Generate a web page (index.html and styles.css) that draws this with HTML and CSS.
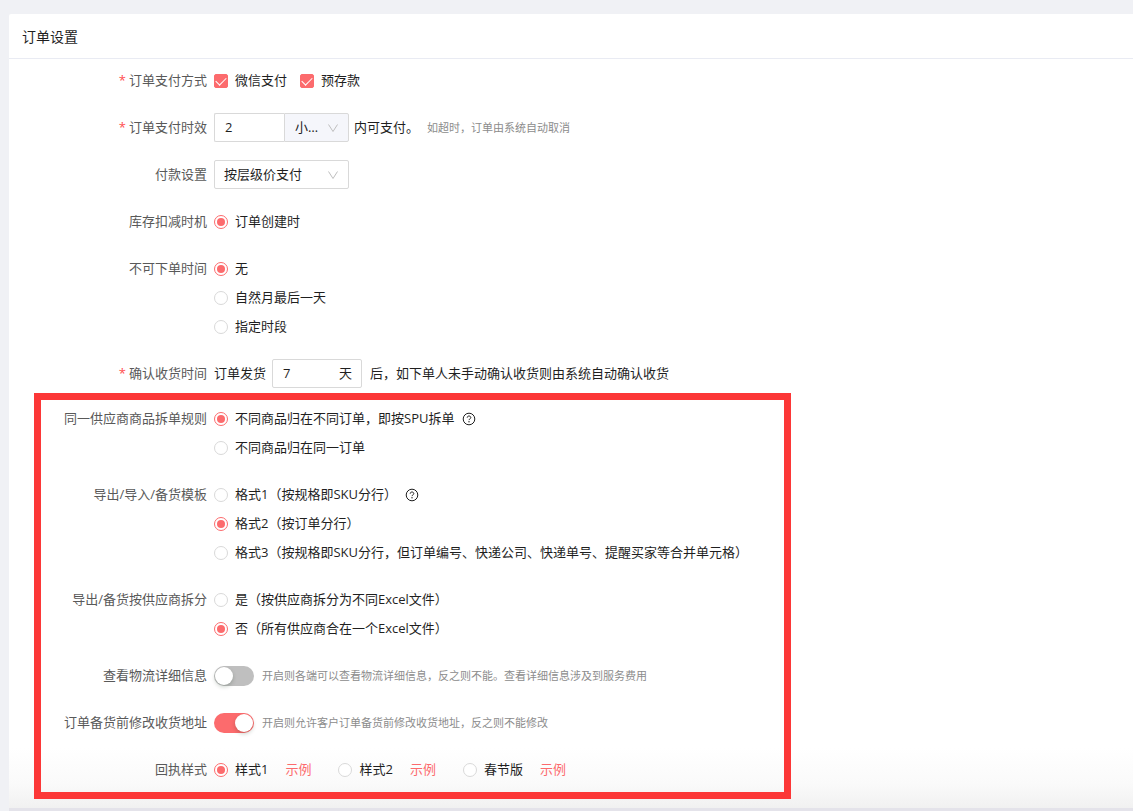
FILE: index.html
```html
<!DOCTYPE html>
<html lang="zh-CN">
  <head>
    <meta charset="UTF-8" />
    <meta name="viewport" content="width=device-width, initial-scale=1.0" />
    <title>订单设置</title>
    <link rel="stylesheet" href="styles.css" />
  </head>
  <body>
    <svg class="sprite" aria-hidden="true">
      <symbol id="icon-help" viewBox="0 0 14 14">
        <circle cx="7" cy="7" r="5.8" fill="none" stroke="currentColor" stroke-width="1" />
        <path d="M5.2 5.7C5.2 4.6 6 4 7 4s1.8.6 1.8 1.6c0 1.3-1.8 1.3-1.8 2.5" fill="none" stroke="currentColor" stroke-width="1" />
        <circle cx="7" cy="9.8" r="0.7" fill="currentColor" />
      </symbol>
      <symbol id="icon-down" viewBox="0 0 12 12">
        <path d="M1.5 2.5L6 9.500l4.500-7" fill="none" stroke="currentColor" stroke-width="1" />
      </symbol>
    </svg>

    <main class="panel">
      <h1 class="panel-title">订单设置</h1>
      <form class="settings">
        <div class="form-row" role="group" aria-labelledby="l-pay">
          <span class="row-label required" id="l-pay">订单支付方式</span>
          <div class="row-line">
            <label class="choice"><input type="checkbox" checked />微信支付</label>
            <label class="choice"><input type="checkbox" checked />预存款</label>
          </div>
        </div>

        <div class="form-row">
          <label class="row-label required" for="expire">订单支付时效</label>
          <div class="row-line">
            <div class="input-group">
              <input class="group-input" id="expire" type="text" value="2" />
              <div class="select-box unit">
                <select aria-label="时间单位">
                  <option>小时</option>
                  <option>分钟</option>
                </select>
                <svg class="arrow"><use href="#icon-down" /></svg>
              </div>
            </div>
            <span class="after">内可支付。</span>
            <span class="hint">如超时，订单由系统自动取消</span>
          </div>
        </div>

        <div class="form-row">
          <label class="row-label" for="payset">付款设置</label>
          <div class="row-line">
            <div class="select-box">
              <select id="payset">
                <option>按层级价支付</option>
              </select>
              <svg class="arrow"><use href="#icon-down" /></svg>
            </div>
          </div>
        </div>

        <div class="form-row" role="group" aria-labelledby="l-stock">
          <span class="row-label" id="l-stock">库存扣减时机</span>
          <div class="row-line">
            <label class="choice"><input type="radio" name="stock" checked />订单创建时</label>
          </div>
        </div>

        <div class="form-row" role="group" aria-labelledby="l-ban">
          <span class="row-label" id="l-ban">不可下单时间</span>
          <div class="row-stack">
            <label class="choice"><input type="radio" name="ban" checked />无</label>
            <label class="choice"><input type="radio" name="ban" />自然月最后一天</label>
            <label class="choice"><input type="radio" name="ban" />指定时段</label>
          </div>
        </div>

        <div class="form-row">
          <label class="row-label required" for="receive">确认收货时间</label>
          <div class="row-line">
            <span>订单发货</span>
            <div class="day-box">
              <input id="receive" type="text" value="7" />
              <span>天</span>
            </div>
            <span>后，如下单人未手动确认收货则由系统自动确认收货</span>
          </div>
        </div>

        <section class="highlight">
          <div class="form-row" role="group" aria-labelledby="l-split">
            <span class="row-label" id="l-split">同一供应商商品拆单规则</span>
            <div class="row-stack">
              <div class="row-line">
                <label class="choice"><input type="radio" name="split" checked />不同商品归在不同订单，即按SPU拆单</label>
                <button class="help" type="button" aria-label="说明"><svg><use href="#icon-help" /></svg></button>
              </div>
              <label class="choice"><input type="radio" name="split" />不同商品归在同一订单</label>
            </div>
          </div>

          <div class="form-row" role="group" aria-labelledby="l-tpl">
            <span class="row-label" id="l-tpl">导出/导入/备货模板</span>
            <div class="row-stack">
              <div class="row-line">
                <label class="choice"><input type="radio" name="tpl" />格式1（按规格即SKU分行）</label>
                <button class="help" type="button" aria-label="说明"><svg><use href="#icon-help" /></svg></button>
              </div>
              <label class="choice"><input type="radio" name="tpl" checked />格式2（按订单分行）</label>
              <label class="choice"><input type="radio" name="tpl" />格式3（按规格即SKU分行，但订单编号、快递公司、快递单号、提醒买家等合并单元格）</label>
            </div>
          </div>

          <div class="form-row" role="group" aria-labelledby="l-supplier">
            <span class="row-label" id="l-supplier">导出/备货按供应商拆分</span>
            <div class="row-stack">
              <label class="choice"><input type="radio" name="supplier" />是（按供应商拆分为不同Excel文件）</label>
              <label class="choice"><input type="radio" name="supplier" checked />否（所有供应商合在一个Excel文件）</label>
            </div>
          </div>

          <div class="form-row">
            <label class="row-label" for="logistics">查看物流详细信息</label>
            <div class="row-line">
              <input class="switch" id="logistics" type="checkbox" role="switch" />
              <span class="hint">开启则各端可以查看物流详细信息，反之则不能。查看详细信息涉及到服务费用</span>
            </div>
          </div>

          <div class="form-row">
            <label class="row-label" for="address">订单备货前修改收货地址</label>
            <div class="row-line">
              <input class="switch" id="address" type="checkbox" role="switch" checked />
              <span class="hint">开启则允许客户订单备货前修改收货地址，反之则不能修改</span>
            </div>
          </div>

          <div class="form-row" role="group" aria-labelledby="l-receipt">
            <span class="row-label" id="l-receipt">回执样式</span>
            <div class="row-line">
              <label class="choice"><input type="radio" name="receipt" checked />样式1</label>
              <a class="sample" href="#">示例</a>
              <label class="choice"><input type="radio" name="receipt" />样式2</label>
              <a class="sample" href="#">示例</a>
              <label class="choice"><input type="radio" name="receipt" />春节版</label>
              <a class="sample" href="#">示例</a>
            </div>
          </div>
        </section>
      </form>
    </main>
  </body>
</html>
```

FILE: styles.css
```css
* {
  margin: 0;
  padding: 0;
  box-sizing: border-box;
}
body {
  --primary: #fc6b6d;
  --border: #d9d9d9;
  padding: 14px 0 0 9px;
  background: #f0f1f5;
  color: #1f1f1f;
  font-family: "Open Sans", "Noto Sans CJK SC", sans-serif;
  font-size: 13px;
  line-height: 29px;
}
input,
select,
button {
  font: inherit;
  color: inherit;
}
.sprite {
  position: absolute;
  width: 0;
  height: 0;
}
.panel {
  background: linear-gradient(to top, #f1f1f1, #fafafa 24px, #fff 60px);
  border-bottom: 3px solid #e4e3ea;
  border-radius: 2px 0 0 0;
}
.panel-title {
  padding: 9px 13px 7px;
  border-bottom: 1px solid #e9ebf3;
  font-size: 14px;
  font-weight: 400;
  line-height: 28px;
}
.settings {
  --label-width: 198px;
  padding: 7px 0 9px;
}
.form-row {
  display: flex;
  gap: 7px;
}
.form-row + .form-row {
  margin-top: 18px;
}
.row-label {
  flex: none;
  width: var(--label-width);
  color: #595959;
  text-align: right;
  white-space: nowrap;
}
.required::before {
  content: "*";
  margin-right: 3px;
  color: #ff4d4f;
}
.row-line {
  display: flex;
  align-items: center;
  min-height: 29px;
}
.row-stack {
  display: flex;
  flex-direction: column;
  align-items: flex-start;
}

/* checkbox & radio */
.choice {
  display: flex;
  align-items: center;
  gap: 7px;
  cursor: pointer;
}
.choice + .choice {
  margin-left: 13px;
}
.row-stack .choice {
  margin-left: 0;
}
.choice input {
  appearance: none;
  display: grid;
  place-items: center;
  flex: none;
  width: 14px;
  height: 14px;
  border: 1px solid var(--border);
  background: #fff;
}
.choice input[type="radio"] {
  border-radius: 50%;
}
.choice input:checked {
  border-color: var(--primary);
}
.choice input[type="radio"]:checked::before {
  content: "";
  width: 8px;
  height: 8px;
  border-radius: 50%;
  background: var(--primary);
}
.choice input[type="checkbox"] {
  border-radius: 2px;
}
.choice input[type="checkbox"]:checked {
  background: var(--primary);
}
.choice input[type="checkbox"]:checked::before {
  content: "";
  width: 9px;
  height: 5px;
  border: solid #fff;
  border-width: 0 0 1px 1px;
  transform: translateY(-1px) rotate(-45deg);
}

/* inputs */
.input-group {
  display: flex;
  width: 135px;
}
.group-input {
  width: 70px;
  height: 29px;
  padding: 0 10px;
  border: 1px solid var(--border);
  border-right: 0;
  border-radius: 2px 0 0 2px;
}
.select-box {
  position: relative;
  width: 135px;
  height: 29px;
}
.select-box select {
  appearance: none;
  width: 100%;
  height: 100%;
  padding: 0 28px 0 9px;
  border: 1px solid var(--border);
  border-radius: 2px;
  background: #fff;
  line-height: 27px;
  text-overflow: ellipsis;
}
.unit {
  flex: 1;
}
.unit select {
  padding: 0 28px 0 10px;
  border-radius: 0 2px 2px 0;
  background: #f5f6fb;
}
.arrow {
  position: absolute;
  top: 9px;
  right: 10px;
  width: 12px;
  height: 12px;
  color: #bfbfbf;
  pointer-events: none;
}
.day-box {
  display: flex;
  width: 90px;
  height: 29px;
  margin: 0 8px 0 6px;
  padding: 0 9px 0 10px;
  border: 1px solid var(--border);
  border-radius: 2px;
  line-height: 27px;
}
.day-box input {
  flex: 1;
  min-width: 0;
  border: 0;
  background: none;
}
.after {
  margin-left: 5px;
}
.hint {
  margin-left: 8px;
  color: #8c8c8c;
  font-size: 11px;
}

/* highlighted block */
.highlight {
  --label-width: 166px;
  max-width: 757px;
  margin: 5px 0 0 25px;
  padding: 4px 0 8px;
  border: 7px solid #fc3737;
}
.help {
  display: flex;
  margin-left: 8px;
  border: 0;
  background: none;
  cursor: pointer;
}
.help svg {
  width: 14px;
  height: 14px;
}
.switch {
  appearance: none;
  display: flex;
  width: 40px;
  height: 20px;
  padding: 1px;
  border-radius: 10px;
  background: #bfbfbf;
  cursor: pointer;
}
.switch::before {
  content: "";
  width: 18px;
  height: 18px;
  border-radius: 50%;
  background: #fff;
  box-shadow: 0 2px 4px rgba(0, 35, 11, 0.2);
}
.switch:checked {
  justify-content: flex-end;
  background: var(--primary);
}
.sample {
  margin-left: 17px;
  color: var(--primary);
  text-decoration: none;
}
.sample + .choice {
  margin-left: 27px;
}
```
